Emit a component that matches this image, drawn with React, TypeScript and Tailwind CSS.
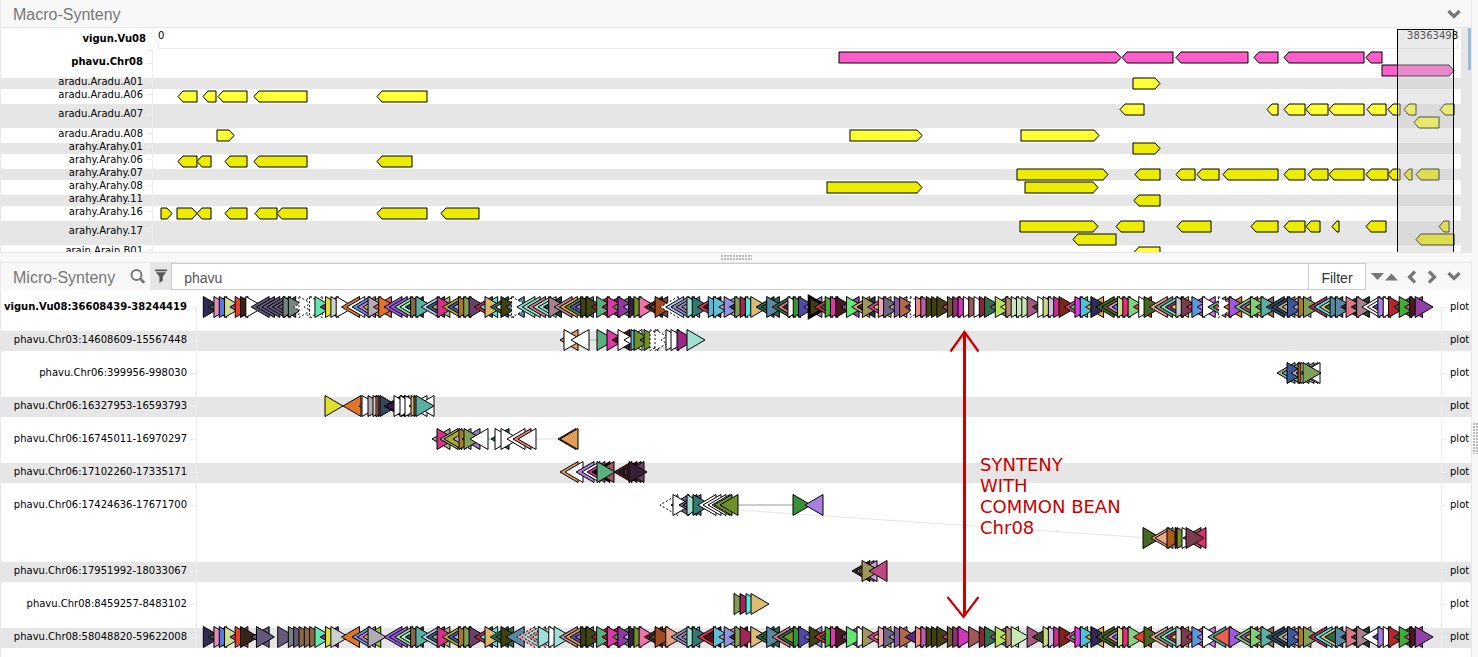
import { useId, useState } from "react";

type Arrow = [dir: "L" | "R", from: number, to: number, line?: number];

interface MacroRow {
  name: string;
  bold?: boolean;
  size: "short" | "medium" | "tall" | "first";
  fill: string;
  arrows: Arrow[];
}

const PINK = "#ff5ccc";
const LEMON = "#ffff33";
const GOLD = "#ecec00";

const MACRO_ROWS: MacroRow[] = [
  { name: "phavu.Chr08", bold: true, size: "first", fill: PINK, arrows: [["R", 839, 1121], ["L", 1122, 1173], ["L", 1176, 1248], ["L", 1254, 1278], ["L", 1284, 1364], ["L", 1366, 1382], ["R", 1382, 1454, 1]] },
  { name: "aradu.Aradu.A01", size: "short", fill: LEMON, arrows: [["R", 1133, 1160]] },
  { name: "aradu.Aradu.A06", size: "medium", fill: LEMON, arrows: [["L", 178, 197], ["L", 203, 216], ["L", 218, 247], ["L", 254, 307], ["L", 377, 427]] },
  { name: "aradu.Aradu.A07", size: "tall", fill: LEMON, arrows: [["L", 1120, 1144], ["L", 1267, 1278], ["L", 1284, 1305], ["L", 1306, 1328], ["L", 1329, 1364], ["L", 1367, 1386], ["L", 1388, 1400], ["L", 1404, 1416], ["L", 1440, 1454], ["L", 1414, 1439, 1]] },
  { name: "aradu.Aradu.A08", size: "medium", fill: LEMON, arrows: [["R", 217, 234], ["R", 850, 922], ["R", 1021, 1099]] },
  { name: "arahy.Arahy.01", size: "short", fill: GOLD, arrows: [["R", 1133, 1160]] },
  { name: "arahy.Arahy.06", size: "medium", fill: GOLD, arrows: [["L", 178, 197], ["L", 197, 211], ["L", 225, 247], ["L", 254, 307], ["L", 377, 412]] },
  { name: "arahy.Arahy.07", size: "short", fill: GOLD, arrows: [["R", 1017, 1108], ["L", 1135, 1160], ["L", 1176, 1195], ["L", 1197, 1219], ["L", 1223, 1278], ["L", 1284, 1305], ["L", 1308, 1328], ["L", 1329, 1364], ["L", 1366, 1388], ["L", 1388, 1400], ["L", 1404, 1412], ["L", 1416, 1439]] },
  { name: "arahy.Arahy.08", size: "medium", fill: GOLD, arrows: [["R", 827, 922], ["R", 1025, 1098]] },
  { name: "arahy.Arahy.11", size: "short", fill: GOLD, arrows: [["L", 1134, 1160]] },
  { name: "arahy.Arahy.16", size: "medium", fill: GOLD, arrows: [["R", 161, 172], ["R", 177, 197], ["L", 197, 211], ["L", 225, 247], ["L", 255, 277], ["L", 277, 307], ["L", 377, 427], ["L", 441, 479]] },
  { name: "arahy.Arahy.17", size: "tall", fill: GOLD, arrows: [["R", 1020, 1098], ["L", 1116, 1144], ["L", 1177, 1211], ["L", 1251, 1278], ["L", 1284, 1305], ["L", 1306, 1320], ["L", 1332, 1339], ["L", 1366, 1386], ["L", 1439, 1449], ["L", 1073, 1116, 1], ["L", 1416, 1454, 1]] },
  { name: "arain.Arain.B01", size: "medium", fill: LEMON, arrows: [["L", 1134, 1160]] },
];

const MACRO_SIZES = {
  first: { row: "h-[28px]", label: "h-[24px]", tick: "h-[13px]", centre: 7.5 },
  short: { row: "h-[11px]", label: "h-[7px]", tick: "h-[4px]", centre: 5.5 },
  medium: { row: "h-[15px]", label: "h-[11px]", tick: "h-[6px]", centre: 7.5 },
  tall: { row: "h-[24px]", label: "h-[20px]", tick: "h-[11px]", centre: 5.5 },
};

function arrowPoints([dir, a, b, line = 0]: Arrow, centre: number) {
  const y = centre + line * 13;
  const t = y - 5.5;
  const d = y + 5.5;
  const head = Math.min(5, b - a);
  return dir === "R"
    ? `${a},${t} ${b - head},${t} ${b},${y} ${b - head},${d} ${a},${d}`
    : `${b},${t} ${a + head},${t} ${a},${y} ${a + head},${d} ${b},${d}`;
}

/* Gene tokens: > forward, < reverse, ) forward dotted, ( reverse dotted, ! highlighted, - gap. */
const REFERENCE_GENES = `
>332a55 <3d6020 >dd8cbb >5b78dd >cde090 <e0307a >e84028 >332618 >ffffff <665a7c
<665a7c <665a7c <665a7c <665a7c <665a7c >778582 >778582 (ffffff )ffffff (ffffff
)ffffff >62e6b0 <9a2080 >e0e02c >c9d2cd >ffffff <e07428 <ffffff <5b98dd <e36fe0
<90cc30 >b3aab3 <e0604f >e07428 <9a5ce0 <9a5ce0 <8fd98c <a8ecc8 <28504a >8a6844
>5ab0a4 <b0ccea <405a72 <a0b088 >d63088 <b0a828 <405aa0 <c8a0e0 >a87820 >80a058
>6a4068 <c02858 <55e8e0 >d8b868 <2e6e50 <ffffff >404010 <5888a8 )ffffff <8fe0cc
<8fe0cc <d87888 <98e0d0 <98e0d0 <204030 >a88090 <b08890 <e0984c <3c8c3c <5c50b0
<a070c0 >404010 >404818 <c02020 >5ab080 <902030 >e038a8 <40b030 >9038a8 <c8a0e0
>38203c >709028 >f070b0 <502818 <6a4838 >a04c20 (ffffff <a8c8ec <988cb8 <988cb8
<988cb8 >a0dccc >307870 <e83050 <481820 >58b8dc >60c0dc <b0a0a0 >9090dc <303828
>80a058 >a02858 >50e8e0 >dcbc70 <2c6848 <2c6848 >5888a8 <2c6848 <d87888 <243828
>ffffff >389038 >5048a8 <9880c8 !404010 <e03040 <2c6848 >40b030 >e038a8 >481820
<8848b0 >60e870 <e09c58 <203840 >a09858 <e038a8 <b8e840 >f0a8b8 >706880 <b0a0a0
>8858a0 >b46848 <582880 )ffffff >f08880 >b860a8 >404010 >404010 >404010 <e03870
>686030 >90307c >d038b8 >ffffff >a05858 >ffffff >8c2438 >307048 <706880 >b8e058
<e8f030 >b88878 >c8e8b8 >c8e8b8 >c8e8b8 >a85880 <404030 >ffffff >c8d880 >d0b8e8
>c83088 >7c2418 <e038a0 <40e040 >dc38e8 >50c0dc <e0a828 >302858 <486820 <486820
<e088c0 <5878d8 >c8e090 >e82c78 >80d480 <e04030 >ffffff >486820 <e8a888 <808888
<60e8b0 <9c2080 <e0e02c >c8d0cc >7c3c50 <e03870 >5898dc <e06fdc >ffffff <50a880
<e04840 )ffffff <e07428 >a058e0 <80cc70 <885898 <e0c030 >80d078 <8a6844 >5ab0a4
<304860 <304860 <a8b080 <c8a0e0 >3c5898 <c8a0e0 >a87c24 >80a058 <a83058 <50e0e8
<d8c070 <2c6848 >5888a8 >5888a8 <2c2820 >d87888 <204030 >a88090 <ffffff <ffffff
<5048a8 >a880e0 >ffffff >b82428 <2c6848 >40b030 <e038a8 >501820 >9040a8`
  .trim()
  .split(/\s+/);

const CHR08_CHANGES: Record<number, string> = {
  8: "-", 9: "<665a7c", 10: ">665a7c", 11: "-", 12: "-", 13: "-", 14: ">665a7c",
  15: "-", 16: ">778582", 17: ">665a7c", 18: ">8a6844", 19: ">8a6844", 20: ">8a6844",
  25: "-", 27: "-", 28: "<5b98dd", 32: "-", 33: "-", 55: "<2e6e50", 57: "<5888a8",
  58: "-", 59: "(e8a0a8", 60: "(98e0d0", 61: "(d87888", 62: "(98e0d0", 63: ">a0e0d8",
  64: "-", 65: ">ffffff", 66: ">a0e0d8", 67: "<b08890", 68: "<e0984c", 86: "-",
  87: ">e0a080", 94: "<481820", 95: "-", 102: "-", 107: "<d87888", 108: "<2c6848",
  109: "<709028", 110: "-", 114: ">404010", 122: "-", 123: ">ffffff", 133: "-",
  138: ">404010", 143: "-", 145: "-", 153: "-", 154: "-", 157: "-", 175: "<e84028",
  176: "-", 190: "<e86050", 191: "-", 192: "-", 212: "-", 218: "<ffffff", 219: "-",
};

const CHR08_GENES = REFERENCE_GENES.map((g, i) => CHR08_CHANGES[i] ?? g);

const GENE_START = 203.3;
const GENE_PITCH = 5.315;
const GENE_LENGTH = 18;

interface Gene {
  token: string;
  x: number;
  y: number;
}

function spread(tokens: string[], y: number): Gene[] {
  return tokens.flatMap((token, i) =>
    token === "-" ? [] : [{ token, x: GENE_START + i * GENE_PITCH, y }],
  );
}

function placed(text: string, y: number): Gene[] {
  return text
    .trim()
    .split(/\s+/)
    .map((part) => {
      const [x, token] = part.split(":");
      return { token, x: Number(x), y };
    });
}

function GeneMark({ token, x, y }: Gene) {
  const kind = token[0];
  const tip = x + GENE_LENGTH;
  const forward = kind === ">" || kind === ")" || kind === "!";
  const points = forward
    ? `${x},${y - 10.5} ${tip},${y} ${x},${y + 10.5}`
    : `${tip},${y - 10.5} ${x},${y} ${tip},${y + 10.5}`;
  return (
    <polygon
      points={points}
      fill={"#" + token.slice(1)}
      stroke="#000"
      strokeWidth={kind === "!" ? 3 : 1}
      strokeDasharray={kind === ")" || kind === "(" ? "2 2" : undefined}
    />
  );
}

interface MicroRow {
  name: string;
  bold?: boolean;
  size: "first" | "stripe" | "plain" | "double";
  genes: Gene[];
  links?: [number, number, number, number, string, number][];
}

const MICRO_ROWS: MicroRow[] = [
  { name: "vigun.Vu08:36608439-38244419", bold: true, size: "first", genes: spread(REFERENCE_GENES, 17) },
  {
    name: "phavu.Chr03:14608609-15567448", size: "stripe", links: [[588, 9, 598, 9, "#ccc", 2]],
    genes: placed(`560:<e09c58 564:>ffffff 571:<ffffff 597:>5ab080 607:>e038a8 612:<481820 618:>ffffff 624:<ffffff
      631:>58b8dc 634:>709028 640:<a05858 644:>709028 650:)ffffff 655:)ffffff 661:(ffffff 666:>ffffff 671:>ffffff 677:>9c2880 687:>a0e0d0`, 9),
  },
  {
    name: "phavu.Chr06:399956-998030", size: "plain",
    genes: placed(`1277:<a0b088 1282:<5ab0a4 1287:>3c5898 1291:<b0a8b8 1296:<b0a0a0 1298:>a85c18 1301:>ffffff 1300:<ffffff 1302:<ffffff 1303:>80a058`, 22),
  },
  {
    name: "phavu.Chr06:16327953-16593793", size: "stripe",
    genes: placed(`325:>e0e02c 343:<e07428 359:<e070e0 362:>ffffff 368:>b3aab3 373:>c9d2cd 376:>f08070 378:>8a4420 380:>304860 384:<302840
      387:<482868 391:<9040a8 394:>ffffff 400:>ffffff 405:>ffffff 409:<ffffff 411:>d8b868 414:>8a6844 416:<ffffff 416:>5ab0a4`, 9),
  },
  {
    name: "phavu.Chr06:16745011-16970297", size: "plain", links: [[488, 22, 492, 22, "#999", 1], [536, 22, 558, 22, "#eee", 2]],
    genes: placed(`432:<a0b088 437:>d63088 440:<a0b088 444:<a8a82c 453:<c8a0e0 459:>a87c24 462:<9880b8 464:>80a058 470:<ffffff
      491:<2c6848 495:>ffffff 501:>ffffff 507:<ffffff 513:<f08070 518:<ffffff 558:<a05c28 560:<e09c58`, 22),
  },
  {
    name: "phavu.Chr06:17102260-17335171", size: "stripe",
    genes: placed(`560:<e09c58 565:<ffffff 576:<a880e0 582:<ffffff 587:<d63088 592:<101010 596:<a05858 597:>5ab080 614:<481820 619:<481820
      623:<6a4068 626:<6a4068 629:>382038`, 9),
  },
  {
    name: "phavu.Chr06:17424636-17671700", size: "double",
    links: [[738, 22, 794, 22, "#ccc", 2], [738, 27, 1150, 55, "#e6e6e6", 1]],
    genes: [
      ...placed(`660:(ffffff 671:<706080 673:>ffffff 679:<706080 683:<706080 687:>a0dccc 693:>307870 698:<ffffff 703:<ffffff 708:<ffffff
        712:<ffffff 714:<709028 720:<709028 793:>389038 805:<a880e0`, 22),
      ...placed(`1143:>486820 1151:<e8a888 1155:<e8a888 1167:>a85c18 1175:>481820 1177:>709028 1182:>ffffff 1183:<a05858 1188:<e02c70 1186:>7c3c50`, 55),
    ],
  },
  { name: "phavu.Chr06:17951992-18033067", size: "stripe", genes: placed(`852:<303030 856:<a09858 859:<c8a0e0 862:>a09858 869:<c04880`, 9) },
  { name: "phavu.Chr08:8459257-8483102", size: "plain", genes: placed(`734:>80a058 740:>a02858 746:>50e8e0 751:>dcbc70`, 22) },
  { name: "phavu.Chr08:58048820-59622008", size: "stripe", genes: spread(CHR08_GENES, 9) },
];

const MICRO_SIZES = {
  first: { row: "h-[41px]", label: "h-[33px]", tick: "h-[18px]" },
  stripe: { row: "h-[20px] bg-[#e6e6e6]", label: "h-[18px]", tick: "h-[10px]" },
  plain: { row: "h-[46px]", label: "h-[43px]", tick: "h-[23px]" },
  double: { row: "h-[79px]", label: "h-[43px]", tick: "h-[23px]" },
};

function Chevron({ points, className }: { points: string; className: string }) {
  return (
    <svg viewBox="0 0 14 14" className={className} aria-hidden="true">
      <polyline points={points} fill="none" stroke="#777" strokeWidth="3.2" />
    </svg>
  );
}

function MacroPanel() {
  return (
    <section className="border-x border-b border-[#e7e7e7]">
      <header className="flex h-[28px] items-center justify-between border-b border-[#e7e7e7] pt-[3px] pr-[10px] pl-3">
        <h2 className="text-base leading-6 text-[#777]">Macro-Synteny</h2>
        <button type="button" aria-label="Collapse macro-synteny" className="h-[14px] w-[14px]">
          <Chevron points="1.5,3 7,8.5 12.5,3" className="h-[14px] w-[14px]" />
        </button>
      </header>
      <div className="flex h-[224px] overflow-hidden bg-white">
        <div className="relative flex-1">
          <div className="flex h-[22px] text-[10px]">
            <div className="flex w-[145px] shrink-0 items-center justify-end leading-none font-bold">vigun.Vu08</div>
            <div className="mr-[3px] ml-3 flex flex-1 flex-col">
              <div className="flex h-[14px] items-center justify-between pt-px leading-none">
                <span>0</span>
                <span>38363498</span>
              </div>
              <div className="h-[7px] border-x border-b border-[#ececec]" />
            </div>
          </div>
          {MACRO_ROWS.map((row, i) => {
            const size = MACRO_SIZES[row.size];
            return (
              <div key={row.name} className={`flex text-[10px] ${size.row} ${i % 2 ? "bg-[#e6e6e6]" : ""}`}>
                <div className={`flex w-[145px] shrink-0 items-center justify-end pr-[3px] leading-none ${size.label} ${row.bold ? "font-bold" : ""}`}>
                  {row.name}
                </div>
                <div className={`w-[7px] shrink-0 border-r border-[#ececec] ${i === 0 ? "border-t" : ""}`}>
                  <div className={`border-b border-[#ececec] ${size.tick}`} />
                </div>
                <svg className="relative h-full min-w-0 flex-1 overflow-visible" aria-hidden="true">
                  <g transform="translate(-153 0)" stroke="#000" fill={row.fill}>
                    {row.arrows.map((a) => (
                      <polygon key={a.join()} points={arrowPoints(a, size.centre)} />
                    ))}
                  </g>
                </svg>
              </div>
            );
          })}
          <div className="absolute top-[1px] right-[7px] h-[240px] w-[57px] border border-black bg-[#c8c8c8]/40" />
        </div>
        <div className="flex w-[10px] justify-end bg-[#e6e6e6]">
          <div className="h-[42px] w-[3px] bg-[#9dbcd6]" />
        </div>
      </div>
    </section>
  );
}

function MicroToolbar() {
  const [query, setQuery] = useState("phavu");
  return (
    <header className="flex h-[28px] border-t border-[#e7e7e7]">
      <h2 className="pt-[3px] pl-3 text-base leading-6 text-[#777]">Micro-Synteny</h2>
      <button type="button" aria-label="Search" className="ml-[15px] flex w-[20px] items-center">
        <svg viewBox="0 0 16 16" className="h-4 w-4" aria-hidden="true">
          <circle cx="6.5" cy="6" r="5" fill="none" stroke="#777" strokeWidth="2" />
          <path d="M10 9.5 L14.2 13.7" stroke="#777" strokeWidth="2.8" />
        </svg>
      </button>
      <button type="button" aria-label="Filter rows" className="flex w-[21px] items-center justify-center bg-[#e6e6e6] pb-[2px]">
        <svg viewBox="0 0 14 14" className="h-[14px] w-[14px]" aria-hidden="true">
          <path d="M1 0.5h12v1.8H1z M1.8 3.2h10.4L8.8 7.4v4L5.4 14V7.4z" fill="#555" />
        </svg>
      </button>
      <form className="flex min-w-0 flex-1" onSubmit={(e) => e.preventDefault()}>
        <input
          aria-label="Filter text"
          value={query}
          onChange={(e) => setQuery(e.target.value)}
          className="min-w-0 flex-1 border border-[#ccc] bg-white px-3 pt-[3px] text-sm text-[#555] outline-none"
        />
        <button type="submit" className="w-[57px] border-y border-r border-[#ccc] bg-white pt-[3px] text-sm leading-5 text-[#333]">
          Filter
        </button>
      </form>
      <div className="flex items-center pr-[10px] pl-[5px]">
        <button type="button" aria-label="Next match" className="mr-px">
          <svg viewBox="0 0 13 8" className="h-2 w-[13px]" aria-hidden="true">
            <path d="M0 0h13L6.5 7z" fill="#777" />
          </svg>
        </button>
        <button type="button" aria-label="Previous match">
          <svg viewBox="0 0 13 8" className="h-2 w-[13px]" aria-hidden="true">
            <path d="M0 7.5h13L6.5 0.5z" fill="#777" />
          </svg>
        </button>
        <button type="button" aria-label="Scroll left" className="ml-[7px]">
          <Chevron points="10,1.5 4.5,7 10,12.5" className="h-[14px] w-[14px]" />
        </button>
        <button type="button" aria-label="Scroll right" className="ml-[6px]">
          <Chevron points="4,1.5 9.5,7 4,12.5" className="h-[14px] w-[14px]" />
        </button>
        <button type="button" aria-label="Collapse micro-synteny" className="ml-2">
          <Chevron points="1.5,3 7,8.5 12.5,3" className="h-[14px] w-[14px]" />
        </button>
      </div>
    </header>
  );
}

function MicroPanel() {
  return (
    <section className="flex min-h-0 flex-1 flex-col border-x border-[#e7e7e7]">
      <MicroToolbar />
      <div className="relative flex flex-1 flex-col bg-white">
        {MICRO_ROWS.map((row) => {
          const size = MICRO_SIZES[row.size];
          const first = row.size === "first";
          return (
            <div key={row.name} className={`flex text-[10px] ${size.row}`}>
              <div className={`flex w-[189px] shrink-0 items-center justify-end pr-[3px] leading-none whitespace-nowrap ${size.label} ${row.bold ? "font-bold" : ""}`}>
                {row.name}
              </div>
              <div className={first ? "mt-[17px] w-[7px] shrink-0 border-t border-r border-[#ececec]" : "w-[7px] shrink-0 border-r border-[#ececec]"}>
                {!first && <div className={`border-b border-[#ececec] ${size.tick}`} />}
              </div>
              <svg className="relative h-full min-w-0 flex-1 overflow-visible" aria-hidden="true">
                <g transform="translate(-197 0)">
                  {row.links?.map(([x1, y1, x2, y2, stroke, width]) => (
                    <line key={x1 + "-" + y1} x1={x1} y1={y1} x2={x2} y2={y2} stroke={stroke} strokeWidth={width} />
                  ))}
                  {row.genes.map((g, i) => (
                    <GeneMark key={i} {...g} />
                  ))}
                </g>
              </svg>
              <div className={first ? "mt-[17px] w-[6px] shrink-0 border-t border-l border-[#ececec]" : "w-[6px] shrink-0 border-l border-[#ececec]"}>
                {!first && <div className={`border-b border-[#ececec] ${size.tick}`} />}
              </div>
              <button type="button" className={`flex w-[24px] shrink-0 items-center pl-[3px] leading-none ${size.label}`}>
                plot
              </button>
            </div>
          );
        })}
        <div className="pointer-events-none absolute top-[38px] left-[944px] flex text-[#c80000]">
          <svg viewBox="0 0 36 294" className="h-[294px] w-[36px]" fill="none" stroke="#cc0000" aria-hidden="true">
            <path d="M19.5 4V288" strokeWidth="3" />
            <path d="M5.5 23.5L19.5 4L33.5 23.5M2.5 269L18.5 289L33.5 269" strokeWidth="2.2" />
          </svg>
          <p className="mt-[126px] ml-[-1px] text-lg leading-[21px]">
            SYNTENY
            <br />
            WITH
            <br />
            COMMON BEAN
            <br />
            Chr08
          </p>
        </div>
      </div>
    </section>
  );
}

function Grip({ className, dots }: { className: string; dots: string }) {
  const id = useId();
  return (
    <svg viewBox={dots} className={className} aria-hidden="true">
      <defs>
        <pattern id={id} width="3" height="3" patternUnits="userSpaceOnUse">
          <rect width="2" height="2" fill="#bbb" />
        </pattern>
      </defs>
      <rect width="31" height="31" fill={`url(#${id})`} />
    </svg>
  );
}

export default function App() {
  return (
    <div className="flex min-h-screen bg-[#f8f8f8] font-['Liberation_Sans',Arial,sans-serif] text-black">
      <main className="flex min-w-0 flex-1 flex-col [&_p]:font-['DejaVu_Sans',sans-serif] [&_.text-\[10px\]]:font-['DejaVu_Sans',sans-serif]">
        <MacroPanel />
        <div className="flex h-[9px] items-center justify-center">
          <Grip className="h-[5px] w-[31px]" dots="0 0 31 5" />
        </div>
        <MicroPanel />
      </main>
      <div className="flex w-[6px] flex-col items-end pt-[423px]">
        <Grip className="h-[31px] w-[5px]" dots="0 0 5 31" />
      </div>
    </div>
  );
}
